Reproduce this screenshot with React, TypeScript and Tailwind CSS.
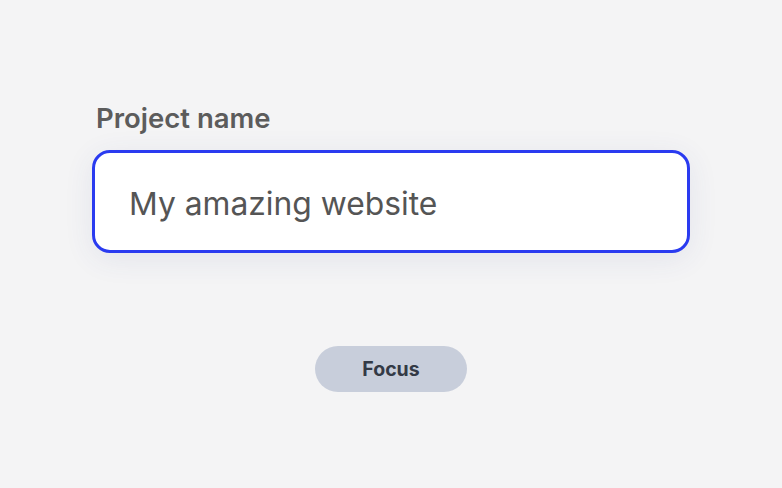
export default function App() {
  return (
    <div
      className="min-h-screen w-full bg-[#f4f4f5] flex flex-col items-center pt-[98px]"
      style={{ fontFamily: "Inter, 'Noto Sans', sans-serif" }}
    >
      <div className="w-[598px] flex flex-col">
        <label className="text-[27.5px] leading-[40px] font-semibold text-[#5c5c5c] pl-[4px] mb-[12px]">
          Project name
        </label>
        <input
          defaultValue="My amazing website"
          className="h-[103px] w-full rounded-[18px] border-[3px] border-[#2a3bf0] bg-white px-[34px] pt-[3px] text-[31.8px] text-[#555555] outline-none shadow-[0_6px_30px_rgba(60,70,140,0.09)]"
        />
      </div>
      <button className="mt-[93px] h-[46px] w-[152px] rounded-full bg-[#c8cedb] text-[19.5px] font-bold text-[#343a46] pt-[1px]">
        Focus
      </button>
    </div>
  );
}
